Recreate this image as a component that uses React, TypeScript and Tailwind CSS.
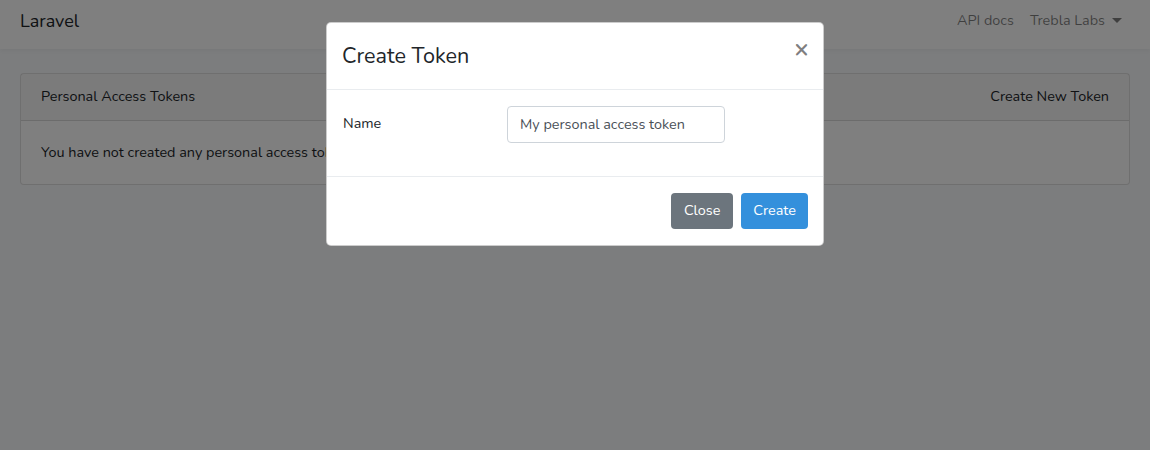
import { useState } from 'react';

const App = () => {
  const [name, setName] = useState('My personal access token');

  return (
    <div className="relative min-h-[450px] bg-[#f8fafc] text-[14.4px] leading-[1.6] text-[#212529] font-['Nunito','Lato','Open_Sans',sans-serif]">
      {/* navbar */}
      <nav className="h-[49px] bg-white shadow-[0_2px_4px_rgba(0,0,0,0.04)] flex items-center justify-between px-5 pb-[7px]">
        <span className="text-[18px] leading-none">Laravel</span>
        <div className="flex items-center gap-4 text-[rgba(0,0,0,0.5)] pr-[8px]">
          <span>API docs</span>
          <span className="flex items-center gap-[7px]">
            Trebla Labs
            <span className="inline-block w-0 h-0 border-x-[5px] border-x-transparent border-t-[5px] border-t-[rgba(0,0,0,0.5)]" />
          </span>
        </div>
      </nav>

      {/* page */}
      <main className="px-5 py-6">
        <div className="bg-white border border-[rgba(0,0,0,0.125)] rounded-[4px]">
          <div className="flex justify-between items-center h-[47px] px-5 bg-[rgba(0,0,0,0.03)] border-b border-[rgba(0,0,0,0.125)]">
            <span>Personal Access Tokens</span>
            <span>Create New Token</span>
          </div>
          <div className="p-5">
            <p>You have not created any personal access tokens.</p>
          </div>
        </div>
      </main>

      {/* backdrop */}
      <div className="absolute inset-0 bg-black/50" />

      {/* modal */}
      <div className="absolute inset-x-0 top-[22px] flex justify-center">
        <div className="w-[498px] bg-white border border-[rgba(0,0,0,0.2)] rounded-[5px]">
          <div className="flex justify-between items-start pl-[15px] pr-4 pt-4 pb-[15px] border-b border-[#e9ecef]">
            <h4 className="text-[21.6px] leading-[1.6]">Create Token</h4>
            <button type="button" className="text-[25px] font-bold leading-none text-black/50 mt-[-2px] mr-[-2px]">
              &times;
            </button>
          </div>

          <div className="pt-4 px-4 pb-[17px]">
            <form className="flex mb-4">
              <label htmlFor="token-name" className="w-[164px] pt-[6px] leading-[1.6]">
                Name
              </label>
              <input
                id="token-name"
                type="text"
                value={name}
                onChange={(e) => setName(e.target.value)}
                className="h-[37px] w-[218px] px-3 border border-[#ced4da] rounded-[4px] text-[#495057] outline-none"
              />
            </form>
          </div>

          <div className="flex justify-end gap-2 pl-4 pr-[15px] py-4 border-t border-[#e9ecef]">
            <button type="button" className="h-[36px] px-[13px] rounded-[4px] bg-[#6c757d] text-white">
              Close
            </button>
            <button type="button" className="h-[36px] px-3 rounded-[4px] bg-[#3490dc] text-white">
              Create
            </button>
          </div>
        </div>
      </div>
    </div>
  );
};

export default App;
